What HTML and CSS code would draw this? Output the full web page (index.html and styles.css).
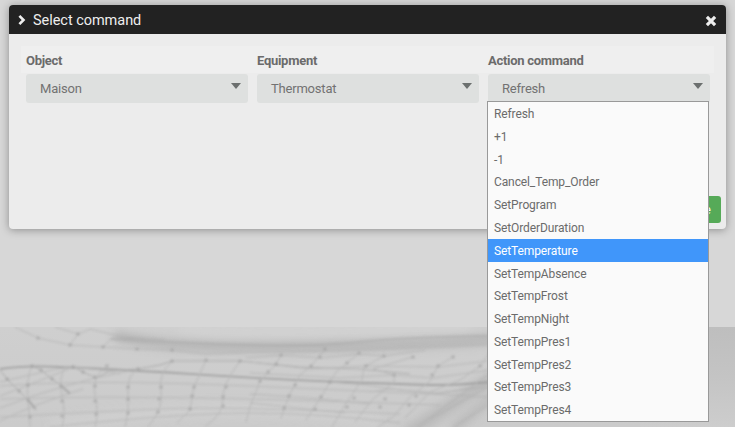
FILE: index.html
```html
<!DOCTYPE html>
<html lang="en">
<head>
<meta charset="utf-8">
<title>Select command</title>
<link rel="stylesheet" href="styles.css">
</head>
<body>
<main class="page">
  <section class="dialog">
    <header class="dialog-header">
      <svg class="chevron" width="8" height="10" viewBox="0 0 8 10"><path d="M1.4 .9 5.5 5 1.4 9.1"/></svg>
      <h1 class="dialog-title">Select command</h1>
      <svg class="close" width="12" height="12" viewBox="0 0 12 12"><path d="M1.9 1.9 10.1 10.1M10.1 1.9 1.9 10.1"/></svg>
    </header>
    <div class="dialog-body">
      <div class="labels"><span>Object</span><span>Equipment</span><span>Action command</span></div>
      <div class="fields">
        <div class="select">Maison<i class="caret"></i></div>
        <div class="select">Thermostat<i class="caret"></i></div>
        <div class="select">Refresh<i class="caret"></i>
          <ul class="options">
            <li>Refresh</li>
            <li>+1</li>
            <li>-1</li>
            <li>Cancel_Temp_Order</li>
            <li>SetProgram</li>
            <li>SetOrderDuration</li>
            <li class="active">SetTemperature</li>
            <li>SetTempAbsence</li>
            <li>SetTempFrost</li>
            <li>SetTempNight</li>
            <li>SetTempPres1</li>
            <li>SetTempPres2</li>
            <li>SetTempPres3</li>
            <li>SetTempPres4</li>
          </ul>
        </div>
      </div>
      <div class="actions"><button class="validate">Validate</button></div>
    </div>
  </section>
  <svg class="mesh" width="735" height="100" viewBox="0 0 735 100">
    <defs>
      <linearGradient id="base" x1="0" y1="0" x2="0" y2="1"><stop offset="0" stop-color="#cfcfcf"/><stop offset="1" stop-color="#cbcbcb"/></linearGradient>
      <linearGradient id="right" x1="0" y1="0" x2="0" y2="1"><stop offset="0" stop-color="#bebebe"/><stop offset=".5" stop-color="#c4c4c4"/><stop offset="1" stop-color="#cdcdcd"/></linearGradient>
      <filter id="haze" x="-20%" y="-50%" width="140%" height="200%"><feGaussianBlur stdDeviation="4"/></filter>
      <filter id="soft" x="-5%" y="-20%" width="110%" height="140%"><feGaussianBlur stdDeviation=".9"/></filter>
    </defs>
    <rect width="735" height="100" fill="url(#base)"/>
    <rect x="640" width="95" height="100" fill="url(#right)"/>
    <g filter="url(#haze)" fill="none" stroke="#aaa">
      <path d="M115 9C150 17 190 20 255 20S400 19 500 12" stroke-width="9" opacity=".75"/>
      <path d="M180 1C230 7 290 6 350 4L470 0" stroke="#d8d8d8" stroke-width="5" opacity=".6"/>
      <path d="M405 108Q450 80 495 49" stroke-width="13" opacity=".5"/>
      <path d="M452 103 500 64" stroke-width="9" opacity=".5"/>
      <path d="M50 100Q230 70 380 94" stroke="#d4d4d4" stroke-width="15" opacity=".4"/>
    </g>
    <g filter="url(#soft)" fill="none" stroke="#aaa" stroke-width="1" opacity=".58">
      <path d="M0 42Q25 38 60 40C150 43 230 51 340 55S450 59 490 55" stroke="#888" stroke-width="1.8"/>
      <path d="M110 12Q180 16 247 18T360 15T495 9" stroke-width="2"/>
      <path d="M15 0 38 11 70 18 103 20 137 22 172 23 205 27 246 25Q330 25 495 17M55 0 78 7 91 2M78 7 70 18M103 20 112 11 145 12M90 2 123 10 165 13"/>
      <path d="M0 43 7 52 19 64 28 73 36 83M32 39 41 43 52 52 62 59 70 66M72 39 83 45 96 51 110 44 138 42 160 38 172 34 240 34 300 40 360 42 410 47" stroke="#999"/>
      <path d="M0 55Q25 49 52 43T120 47M0 69Q40 54 73 40M0 81Q28 70 62 60T128 44M0 94Q35 77 83 62"/>
      <path d="M0 59Q90 52 250 59T490 70M0 72Q95 69 200 71T440 78M0 90Q95 85 160 82T400 87M50 100Q180 86 250 86T400 96"/>
      <path d="M32 39Q26 51 28 73T30 100M66 39Q58 50 62 68T62 100M106 39Q91 52 95 68T95 100M139 42Q127 46 128 66T125 100M172 34Q158 47 161 64T148 100M206 33 194 60 190 83 177 96M240 34Q222 58 223 72T205 100"/>
      <path d="M281 28 276 37 260 54 250 80 246 95M325 22 311 39 300 48 289 69 281 91M359 26 347 36 336 45 321 70 306 93M384 29 364 40 362 53 347 75 332 100M413 30 373 42 394 48 394 55 372 73 355 95M453 30 438 39 430 54 410 70 394 89 378 100M490 25 480 39 460 53 430 65 405 91"/>
      <path d="M246 31 282 28 320 31 359 27 384 29 425 23M250 35 310 42 365 39 438 40 488 34M250 46 340 51 393 48 433 51 490 43M250 67 320 72 370 77M250 76 345 86M330 55 365 58 400 63 440 67 490 57M370 65 390 62 435 66 490 60M430 92 488 60M418 100 490 46M454 100 491 76"/>
    </g>
    <g class="nodes" filter="url(#soft)">
      <path d="M38 11h.1M78 7h.1M70 18h.1M103 20h.1M137 22h.1M172 23h.1M32 39h.1M41 43h.1M52 52h.1M7 52h.1M19 64h.1M61 59h.1M73 40h.1M83 45h.1M95 50h.1M107 39h.1M138 42h.1M172 34h.1M206 33h.1M240 34h.1M28 73h.1M62 74h.1M95 74h.1M128 72h.1M159 72h.1M192 69h.1M223 70h.1M30 90h.1M62 89h.1M96 87h.1M128 86h.1M158 85h.1M190 82h.1M223 79h.1M28 58h.1M95 59h.1M128 60h.1M161 60h.1M194 60h.1M226 60h.1"/>
      <path d="M281 28h.1M276 37h.1M268 45h.1M325 22h.1M320 30h.1M311 39h.1M359 26h.1M347 36h.1M384 29h.1M366 39h.1M413 30h.1M394 48h.1M453 30h.1M438 39h.1M432 48h.1M480 39h.1M260 54h.1M295 58h.1M330 55h.1M289 69h.1M321 70h.1M354 71h.1M385 72h.1M416 69h.1M284 81h.1M315 82h.1M347 80h.1M380 80h.1M409 78h.1"/>
      <path d="M29 74 35 81M62 60 69 66" stroke-width="2"/>
    </g>
  </svg>
</main>
</body>
</html>
```
FILE: styles.css
```css
* { box-sizing: border-box; }
body {
  margin: 0;
  background: #d7d7d7;
  color: #6b6b6b;
  font-family: Roboto, "Liberation Sans", sans-serif;
  font-size: 13px;
}
.page {
  display: flex;
  flex-direction: column;
  height: 427px;
  padding-top: 5px;
  overflow: hidden;
}
.dialog {
  position: relative;
  z-index: 1;
  width: 717px;
  height: 224px;
  margin-left: 9px;
  background: #ececec;
  border-radius: 4px;
  box-shadow: 0 1px 8px rgba(0, 0, 0, .35);
}
.dialog-header {
  display: flex;
  align-items: center;
  height: 29px;
  padding: 0 9px;
  background: #222;
  border-radius: 4px 4px 0 0;
}
.chevron, .close { fill: none; stroke: #eee; stroke-width: 2.6; }
.close { margin-left: auto; margin-top: 3px; stroke-width: 3.2; }
.dialog-title {
  margin: 2px 0 0 7px;
  color: #eee;
  font-size: 14.5px;
  font-weight: 400;
  letter-spacing: -.04px;
}
.dialog-body { padding: 12px 12px 0; }
.labels, .fields {
  display: grid;
  grid-template-columns: repeat(3, 222px);
  gap: 9px;
  padding-left: 5px;
}
.labels {
  height: 27px;
  margin-bottom: 1px;
  background: #efefef;
  font-weight: 700;
  letter-spacing: -.28px;
  line-height: 29px;
}
.select {
  position: relative;
  display: flex;
  justify-content: space-between;
  height: 29px;
  padding: 0 7px 0 14px;
  background: #dee0df;
  border-radius: 3px;
  color: #727272;
  letter-spacing: -.2px;
  line-height: 29px;
}
.caret {
  height: 0;
  margin-top: 9px;
  border: 5px solid transparent;
  border-top: 6px solid #6c706f;
  border-bottom: 0;
}
.options {
  position: absolute;
  z-index: 2;
  top: 27px;
  left: -1px;
  display: grid;
  grid-template-rows: repeat(14, 1fr);
  width: 222px;
  height: 321px;
  margin: 0;
  padding: 0;
  border: 1px solid #999;
  background: #fafafa;
  color: #6b6b6b;
  font-size: 12px;
  letter-spacing: -.11px;
  line-height: 25px;
  list-style: none;
}
.options li { padding-left: 6px; min-height: 0; }
.options .active { background: #4096fa; color: #fff; }
.actions {
  display: flex;
  justify-content: flex-end;
  margin: 93px -7px 0 0;
}
.validate {
  height: 27px;
  padding: 0 10px;
  border: 0;
  border-radius: 3px;
  background: #56aa58;
  color: #fff;
  font: 13px Roboto, "Liberation Sans", sans-serif;
}
.mesh { flex: none; display: block; margin-top: auto; }
.nodes {
  fill: none;
  stroke: #999;
  stroke-width: 3.5;
  stroke-linecap: round;
  opacity: .5;
}
```
